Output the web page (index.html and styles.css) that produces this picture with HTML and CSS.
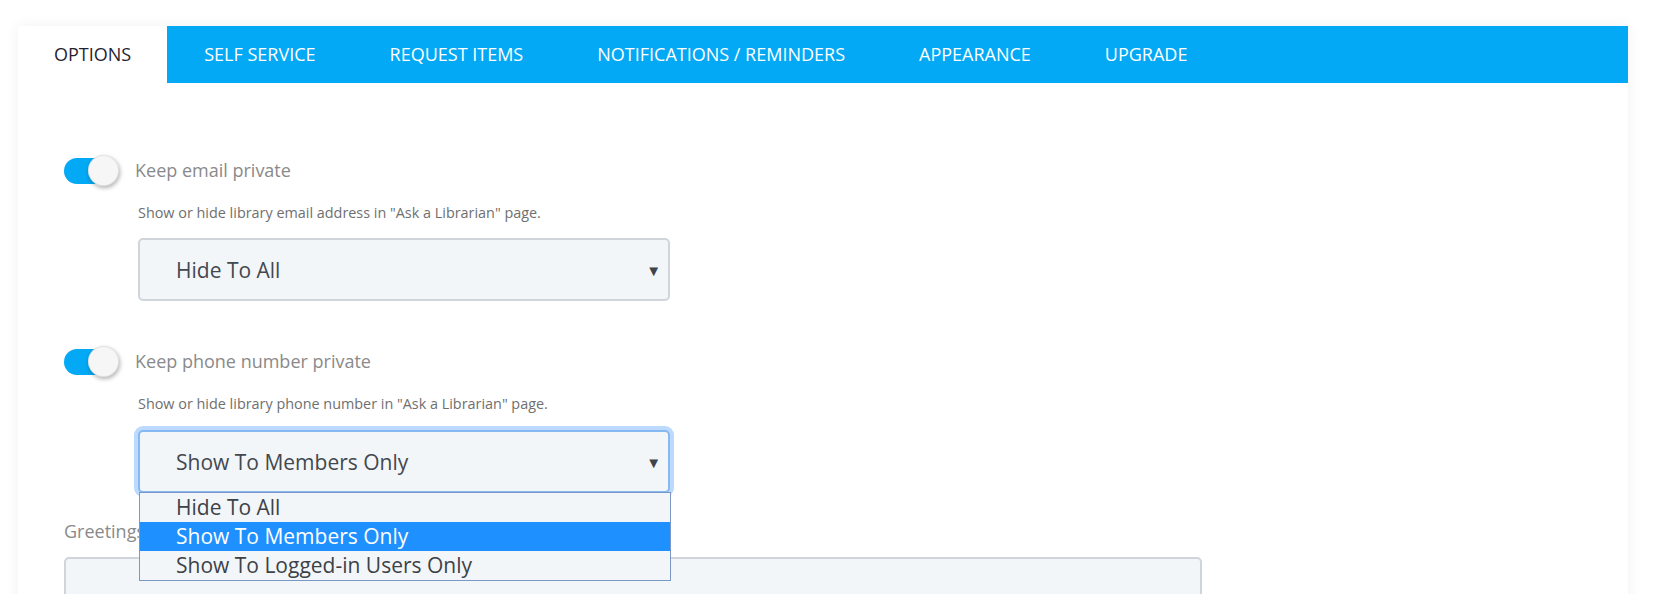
FILE: index.html
```html
<!DOCTYPE html>
<html>
<head>
<meta charset="utf-8">
<link rel="stylesheet" href="styles.css">
</head>
<body>
<div class="page">
  <div class="card">
    <div class="tabs">
      <div class="tab active">OPTIONS</div>
      <div class="tab">SELF SERVICE</div>
      <div class="tab">REQUEST ITEMS</div>
      <div class="tab">NOTIFICATIONS / REMINDERS</div>
      <div class="tab">APPEARANCE</div>
      <div class="tab">UPGRADE</div>
    </div>
    <div class="content">
      <div class="toggle-row">
        <div class="toggle"><span class="track"></span><span class="knob"></span></div>
        <div class="label">Keep email private</div>
      </div>
      <div class="desc">Show or hide library email address in "Ask a Librarian" page.</div>
      <div class="select">
        <span class="value">Hide To All</span>
        <span class="arrow">▼</span>
      </div>

      <div class="toggle-row second">
        <div class="toggle"><span class="track"></span><span class="knob"></span></div>
        <div class="label">Keep phone number private</div>
      </div>
      <div class="desc">Show or hide library phone number in "Ask a Librarian" page.</div>
      <div class="select focused">
        <span class="value">Show To Members Only</span>
        <span class="arrow">▼</span>
        <div class="dropdown">
          <div class="option">Hide To All</div>
          <div class="option selected">Show To Members Only</div>
          <div class="option">Show To Logged-in Users Only</div>
        </div>
      </div>

      <div class="field-label">Greetings</div>
      <div class="textarea"></div>
    </div>
  </div>
</div>
</body>
</html>
```

FILE: styles.css
```css
* { box-sizing: border-box; }
html, body { margin: 0; padding: 0; background: #ffffff; }
body { font-family: "Open Sans", "Liberation Sans", sans-serif; overflow: hidden; height: 594px; }

.page { padding: 26px 36px 0 18px; }

.card {
  width: 1610px;
  min-height: 620px;
  background: #ffffff;
  box-shadow: 0 0 14px rgba(0, 0, 0, 0.06);
}

.tabs {
  display: flex;
  height: 57px;
  background: #03a9f4;
}
.tab {
  padding: 0 37px;
  line-height: 57px;
  font-size: 18px;
  color: #ffffff;
  white-space: nowrap;
}
.tab.active {
  background: #ffffff;
  color: #1f2430;
  padding: 0 36px;
}

.content {
  padding: 71px 46px 0 46px;
}

.toggle-row {
  display: flex;
  align-items: center;
  gap: 17px;
  height: 32px;
}
.toggle-row.second { margin-top: 44px; }

.toggle {
  position: relative;
  width: 54px;
  height: 32px;
  flex: none;
}
.track {
  position: absolute;
  left: 0;
  top: 4px;
  width: 48px;
  height: 26px;
  border-radius: 13px;
  background: #03a9f4;
}
.knob {
  position: absolute;
  left: 24px;
  top: 1px;
  width: 31px;
  height: 31px;
  border-radius: 50%;
  background: #f6f6f6;
  box-shadow: 1px 2px 4px rgba(0, 0, 0, 0.3), inset 0 0 0 1px rgba(0,0,0,0.08);
}

.label {
  font-size: 18px;
  color: #8a8a8a;
}

.desc {
  margin: 18px 0 0 74px;
  font-size: 14.4px;
  line-height: 18px;
  color: #6f6f6f;
}

.select {
  position: relative;
  margin: 16px 0 0 74px;
  width: 532px;
  height: 63px;
  border: 2px solid #cfd5db;
  border-radius: 5px;
  background: #f3f6f9;
  display: flex;
  align-items: center;
  justify-content: space-between;
  padding: 0 7px 0 36px;
}
.select.focused {
  margin-top: 17px;
  border-color: #86b8f2;
  box-shadow: 0 0 0 4px #bcdafd;
}
.value {
  font-size: 21px;
  color: #43484e;
}
.arrow {
  font-size: 15px;
  color: #3f4449;
}

.dropdown {
  position: absolute;
  left: -1px;
  top: 60px;
  width: 532px;
  background: #f3f6f9;
  border: 1px solid #7b97c8;
  z-index: 5;
}
.option {
  height: 29px;
  line-height: 29px;
  padding-left: 36px;
  font-size: 21px;
  color: #3d4247;
}
.option.selected {
  background: #1e90ff;
  color: #ffffff;
}

.field-label {
  margin-top: 27px;
  font-size: 18px;
  line-height: 22px;
  color: #8a8a8a;
}
.textarea {
  margin-top: 15px;
  width: 1138px;
  height: 120px;
  border: 2px solid #cfd5db;
  border-radius: 5px;
  background: #f3f6f9;
}
```
